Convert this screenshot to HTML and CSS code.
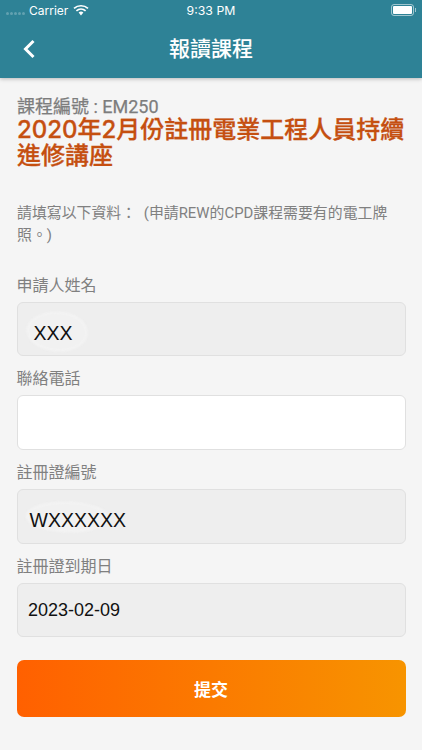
FILE: index.html
```html
<!DOCTYPE html>
<html lang="zh-Hant">
<head>
    <meta charset="UTF-8" />
    <meta name="viewport" content="width=device-width, initial-scale=1.0" />
    <title>報讀課程</title>
    <link rel="stylesheet" href="styles.css">
</head>
<body>
    <header class="top-bar">
        <div class="status-bar">
            <div class="status-left">
                <span class="signal-dots"><i></i><i></i><i></i><i></i><i></i></span>
                <span>Carrier</span>
                <svg class="wifi" width="16" height="12" viewBox="0 0 16 12" aria-hidden="true">
                    <path d="M8 11.5 5.6 8.6a3.7 3.7 0 0 1 4.8 0z" fill="#fff"/>
                    <path d="M1 4.4a10.6 10.6 0 0 1 14 0" fill="none" stroke="#fff" stroke-width="1.7"/>
                    <path d="M3.4 6.9a7 7 0 0 1 9.2 0" fill="none" stroke="#fff" stroke-width="1.7"/>
                </svg>
            </div>
            <span class="status-time">9:33 PM</span>
            <div class="battery"><span class="battery-level"></span></div>
        </div>
        <div class="nav-bar">
            <svg class="back" width="14" height="20" viewBox="0 0 14 20" aria-hidden="true">
                <path d="M11.5 2 3.5 10l8 8" fill="none" stroke="#fff" stroke-width="3"/>
            </svg>
            <h1>報讀課程</h1>
        </div>
    </header>

    <main class="content">
        <div class="course-code">課程編號 : EM250</div>
        <h2 class="course-title">2020年2月份註冊電業工程人員持續進修講座</h2>
        <p class="notice">請填寫以下資料： (申請REW的CPD課程需要有的電工牌照。)</p>

        <form class="form">
            <label class="field-label first">申請人姓名</label>
            <div class="field disabled"><span class="smudge smudge-name"></span><span class="field-text indent-name">XXX</span></div>

            <label class="field-label">聯絡電話</label>
            <div class="field"></div>

            <label class="field-label">註冊證編號</label>
            <div class="field disabled"><span class="smudge smudge-reg"></span><span class="field-text indent-reg">WXXXXXX</span></div>

            <label class="field-label">註冊證到期日</label>
            <div class="field disabled"><span class="field-text date">2023-02-09</span></div>

            <button class="submit" type="button">提交</button>
        </form>
    </main>
</body>
</html>
```

FILE: styles.css
```css
:root {
    --teal: #2e8296;
    --page: #f5f5f5;
    --muted: #808080;
    --field-border: #e0e0e0;
    --field-disabled: #eeeeee;
}

* {
    box-sizing: border-box;
}

html,
body {
    height: 100%;
}

body {
    margin: 0;
    background-color: var(--page);
    font-family: "Inter", "Noto Sans CJK TC", sans-serif;
    overflow: hidden;
}

.top-bar {
    height: 78px;
    background-color: var(--teal);
    color: #fff;
    box-shadow: 0 1px 4px rgba(0, 0, 0, 0.25);
}

.status-bar {
    height: 20px;
    padding: 0 4px 0 6px;
    display: flex;
    align-items: center;
    justify-content: space-between;
    font-size: 12px;
    position: relative;
}

.status-left {
    display: flex;
    align-items: center;
    gap: 4px;
}

.signal-dots {
    display: flex;
    gap: 1px;
    padding-top: 7px;
}

.signal-dots i {
    width: 3px;
    height: 3px;
    border-radius: 50%;
    background-color: rgba(255, 255, 255, 0.25);
}

.wifi {
    margin-left: 1px;
}

.status-time {
    position: absolute;
    left: 0;
    right: 0;
    text-align: center;
    font-size: 12.3px;
}

.battery {
    width: 23px;
    height: 12px;
    border: 1px solid rgba(255, 255, 255, 0.55);
    border-radius: 3px;
    padding: 1px;
    margin-right: 4px;
    position: relative;
}

.battery::after {
    content: "";
    position: absolute;
    right: -3px;
    top: 3px;
    width: 1px;
    height: 4px;
    background-color: rgba(255, 255, 255, 0.55);
}

.battery-level {
    display: block;
    height: 100%;
    background-color: #fff;
    border-radius: 1px;
}

.nav-bar {
    height: 58px;
    padding-bottom: 2px;
    display: flex;
    align-items: center;
    justify-content: center;
    position: relative;
}

.back {
    position: absolute;
    left: 22px;
    top: 19px;
}

.nav-bar h1 {
    margin: 0;
    font-size: 21px;
    font-weight: 500;
    line-height: 1;
}

.content {
    padding: 19px 16.5px 0;
}

.course-code,
.course-title,
.notice {
    padding-left: 0.5px;
}

.course-code {
    font-family: "Roboto", "Noto Sans CJK TC", sans-serif;
    font-size: 18px;
    line-height: 20px;
    color: #7d7d7d;
    -webkit-text-stroke: 0.25px #7d7d7d;
}

.course-title {
    margin: 0 -4px 0 0;
    font-size: 24px;
    line-height: 26px;
    font-weight: 500;
    color: #c54f10;
    -webkit-text-stroke: 0.3px #c54f10;
}

.notice {
    margin: 33px 0 0;
    font-family: "Roboto", "Noto Sans CJK TC", sans-serif;
    font-size: 14.9px;
    line-height: 22px;
    word-spacing: 4px;
    color: var(--muted);
}

.form {
    display: flex;
    flex-direction: column;
}

.field-label {
    font-size: 16px;
    line-height: 20px;
    color: var(--muted);
    margin: 12px 0 7px;
}

.field-label.first {
    margin-top: 28.7px;
}

.field {
    height: 54.7px;
    background-color: #fff;
    border: 1px solid var(--field-border);
    border-radius: 6px;
    display: flex;
    align-items: center;
    position: relative;
}

.field.disabled {
    background-color: var(--field-disabled);
}

.field-text {
    font-family: "Liberation Sans", sans-serif;
    font-size: 19.5px;
    color: #111;
    position: relative;
}

.indent-name {
    padding: 9px 0 0 16px;
}

.indent-reg {
    padding: 9px 0 0 12px;
}

.field-text.date {
    font-size: 18px;
    padding: 0 0 0 10.5px;
}

.smudge {
    position: absolute;
    border-radius: 48% 52% 45% 55%;
    background-color: #f1f1f1;
    box-shadow: 0 0 0 1px #f7f7f7;
    filter: blur(1px);
}

.smudge-name {
    left: 10px;
    top: 10px;
    width: 58px;
    height: 37px;
}

.smudge-reg {
    left: 9px;
    top: 13px;
    width: 80px;
    height: 28px;
}

.submit {
    height: 57px;
    margin-top: 22.5px;
    border: none;
    border-radius: 7px;
    background: linear-gradient(90deg, #ff6000, #f79400);
    color: #fff;
    font-family: inherit;
    font-size: 17px;
    font-weight: 700;
}
```
